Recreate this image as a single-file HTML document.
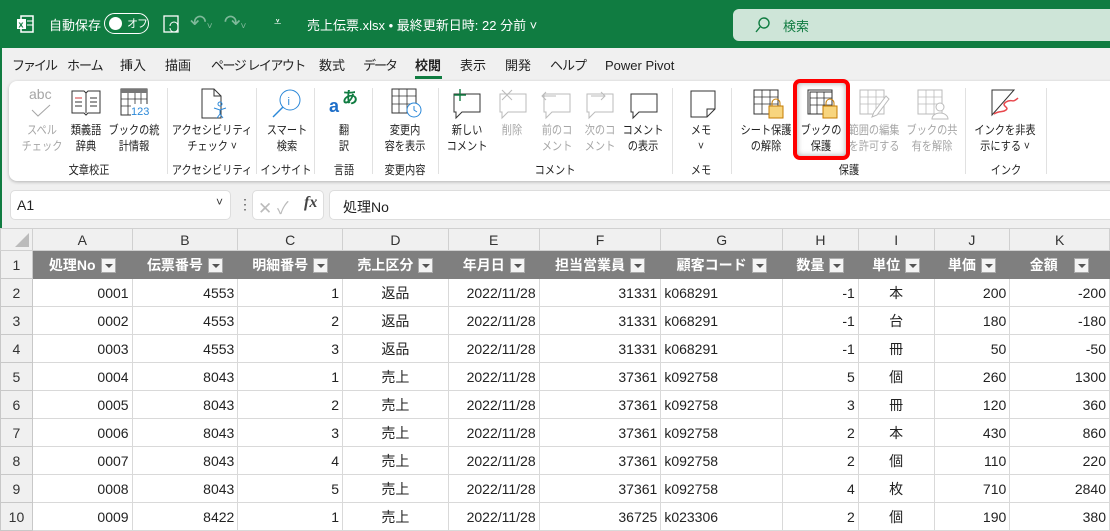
<!DOCTYPE html><html><head><meta charset="utf-8"><style>
*{box-sizing:border-box;margin:0;padding:0}
body{width:1110px;height:528px;overflow:hidden;background:#f0f0f0;font-family:"Liberation Sans","Noto Sans CJK JP",sans-serif;position:relative;color:#222}
.a{position:absolute;white-space:nowrap}
.t{font-size:12px;line-height:16px;text-align:center;transform:translateX(-50%) scaleX(.85)}
.g{color:#a6a6a6}
.sep{position:absolute;top:88px;width:1px;height:86px;background:#e1e1e1}
.gl{font-size:12px;top:162px}
.tab{position:absolute;top:57px;font-size:13px;line-height:18px;white-space:nowrap}
table{position:absolute;left:0;top:228px;border-collapse:collapse;table-layout:fixed;font-size:14px}
td{border:1px solid #d9d9d9;height:28px;padding:0 3px;background:#fff;overflow:hidden;white-space:nowrap}
td.rh{background:#f0f0f0;text-align:center;color:#333;border-color:#c8c8c8}
tr.ch td{background:#f0f0f0;height:22px;text-align:center;color:#333;border-color:#d0d0d0;font-size:14px}
tr.h1 td{background:#7f7f7f;color:#fff;font-weight:bold;text-align:center;border-color:#7f7f7f}
tr.h1 td.rh{background:#f0f0f0;color:#333;font-weight:normal;border-color:#c8c8c8}
.dd{display:inline-block;width:15px;height:15px;background:#f4f4f4;border:1px solid #aaa;vertical-align:middle;margin-left:5px;position:relative}
.dd:after{content:"";position:absolute;left:3px;top:5px;border-left:4px solid transparent;border-right:4px solid transparent;border-top:4px solid #555}
.r{text-align:right}.c{text-align:center}
</style></head><body>
<div class="a" style="left:0;top:0;width:1110px;height:48px;background:#107c41"></div>
<svg class="a" style="left:16px;top:15px" width="18" height="18" viewBox="0 0 18 18"><rect x="5" y="1" width="12" height="16" fill="none" stroke="#fff" stroke-width="1.5"/><rect x="1" y="4" width="9" height="10" fill="#fff"/><text x="2.5" y="12.5" font-size="9" font-weight="bold" fill="#107c41" font-family="Liberation Sans">x</text><line x1="11" y1="6" x2="17" y2="6" stroke="#fff"/><line x1="11" y1="10" x2="17" y2="10" stroke="#fff"/></svg>
<div class="a" style="left:49px;top:15px;color:#fff;font-size:13px">自動保存</div>
<div class="a" style="left:104px;top:13px;width:45px;height:21px;border:1.5px solid #fff;border-radius:11px"></div>
<div class="a" style="left:109px;top:17px;width:13px;height:13px;border-radius:50%;background:#fff"></div>
<div class="a" style="left:127px;top:15px;color:#fff;font-size:11px;letter-spacing:-1px">オフ</div>
<svg class="a" style="left:162px;top:14px" width="20" height="20"><rect x="2" y="2" width="14" height="16" fill="none" stroke="#fff" stroke-width="1.3"/><path d="M8 12a4 4 0 0 1 8 0M16 14a4 4 0 0 1-8 0" stroke="#fff" fill="none"/></svg>
<div class="a" style="left:190px;top:10px;color:#7fb99a;font-size:20px">↶<span style="font-size:10px">˅</span>&nbsp;&nbsp;↷<span style="font-size:10px">˅</span></div>
<div class="a" style="left:274px;top:14px;color:#fff;font-size:13px">⩡</div>
<div class="a" style="left:307px;top:15px;color:#fff;font-size:13px">売上伝票.xlsx • 最終更新日時: 22 分前 ˅</div>
<div class="a" style="left:733px;top:9px;width:400px;height:32px;background:#cee5d8;border-radius:6px"></div>
<svg class="a" style="left:755px;top:17px" width="16" height="16"><circle cx="9" cy="6" r="5" fill="none" stroke="#107c41" stroke-width="1.4"/><line x1="5" y1="10" x2="1" y2="15" stroke="#107c41" stroke-width="1.4"/></svg>
<div class="a" style="left:783px;top:16px;color:#107c41;font-size:13px">検索</div>
<div class="a" style="left:0;top:48px;width:2px;height:480px;background:#107c41"></div>
<div class="tab" style="left:12px;letter-spacing:-2px">ファイル</div>
<div class="tab" style="left:67px;letter-spacing:-1px">ホーム</div>
<div class="tab" style="left:120px">挿入</div>
<div class="tab" style="left:165px">描画</div>
<div class="tab" style="left:211px;letter-spacing:-1.5px">ページ レイアウト</div>
<div class="tab" style="left:319px">数式</div>
<div class="tab" style="left:363px;letter-spacing:-2px">データ</div>
<div class="tab" style="left:415px;font-weight:bold">校閲</div>
<div class="a" style="top:76px;left:415px;width:27px;height:3px;background:#107c41"></div>
<div class="tab" style="left:460px">表示</div>
<div class="tab" style="left:505px">開発</div>
<div class="tab" style="left:550px;letter-spacing:-1px">ヘルプ</div>
<div class="tab" style="left:605px">Power Pivot</div>
<div class="a" style="left:9px;top:81px;width:1120px;height:100px;background:#fff;border-radius:8px;box-shadow:0 1px 3px rgba(0,0,0,.25)"></div>
<!-- icons -->
<div class="a g" style="left:29px;top:86px;font-size:14px">abc</div>
<svg class="a" style="left:29px;top:104px" width="26" height="14"><path d="M3 6l6 6 12-11" stroke="#a6a6a6" fill="none"/></svg>
<svg class="a" style="left:70px;top:88px" width="32" height="30"><path d="M2 3h12l2 2 2-2h12v22H18l-2 2-2-2H2z" fill="none" stroke="#333"/><line x1="16" y1="5" x2="16" y2="25" stroke="#333"/><path d="M5 10h7M5 14h7M5 18h7M20 10h7M20 14h7M20 18h7" stroke="#333"/><line x1="5" y1="10" x2="12" y2="10" stroke="#d13438"/></svg>
<svg class="a" style="left:119px;top:88px" width="32" height="30"><rect x="2" y="1" width="26" height="26" fill="none" stroke="#333"/><rect x="2" y="1" width="26" height="4" fill="#777"/><path d="M2 11h26M2 18h26M9 5v22M16 5v22M22 5v22" stroke="#333" stroke-width=".8"/><rect x="12" y="16" width="20" height="12" fill="#fff"/><text x="12" y="27" font-size="11" fill="#2b88d8" font-family="Liberation Sans">123</text></svg>
<svg class="a" style="left:199px;top:88px" width="32" height="32"><path d="M3 1h12l7 7v22H3z" fill="none" stroke="#333"/><path d="M15 1v7h7" fill="none" stroke="#333"/><circle cx="21" cy="16" r="2" fill="none" stroke="#2b88d8"/><path d="M15 20l6 2 6-2M21 22v4l-3 4M21 26l3 4" stroke="#2b88d8" fill="none"/></svg>
<svg class="a" style="left:270px;top:88px" width="32" height="32"><circle cx="20" cy="12" r="10" fill="none" stroke="#2b88d8"/><line x1="13" y1="19" x2="3" y2="29" stroke="#2b88d8" stroke-width="1.4"/><text x="17.5" y="17" font-size="11" fill="#2b88d8" font-family="Liberation Sans">i</text></svg>
<div class="a" style="left:329px;top:96px;color:#1e6ec8;font-size:18px;font-weight:bold">a</div>
<div class="a" style="left:342px;top:84px;color:#107c41;font-size:16px;font-weight:bold">あ</div>
<svg class="a" style="left:390px;top:88px" width="32" height="32"><rect x="2" y="1" width="24" height="24" fill="none" stroke="#333"/><path d="M2 8h24M2 16h24M9 1v24M17 1v24" stroke="#333" stroke-width=".8"/><circle cx="24" cy="22" r="7" fill="#fff" stroke="#2b88d8"/><path d="M24 18v4l3 2" stroke="#2b88d8" fill="none"/></svg>
<svg class="a" style="left:450px;top:88px" width="34" height="32"><path d="M4 6h26v18H12l-6 6v-6H4z" fill="none" stroke="#333"/><path d="M10 1v12M4 7h12" stroke="#107c41" stroke-width="1.4"/></svg>
<svg class="a" style="left:496px;top:88px" width="34" height="32"><path d="M4 6h26v18H12l-6 6v-6H4z" fill="none" stroke="#bbb"/><path d="M6 2l10 10M16 2L6 12" stroke="#bbb"/></svg>
<svg class="a" style="left:540px;top:88px" width="34" height="32"><path d="M4 6h26v18H12l-6 6v-6H4z" fill="none" stroke="#bbb"/><path d="M2 8h14M6 4L2 8l4 4" stroke="#bbb" fill="none"/></svg>
<svg class="a" style="left:583px;top:88px" width="34" height="32"><path d="M4 6h26v18H12l-6 6v-6H4z" fill="none" stroke="#bbb"/><path d="M8 8h14M18 4l4 4-4 4" stroke="#bbb" fill="none"/></svg>
<svg class="a" style="left:627px;top:88px" width="34" height="32"><path d="M4 6h26v18H12l-6 6v-6H4z" fill="none" stroke="#333"/></svg>
<svg class="a" style="left:688px;top:88px" width="30" height="32"><path d="M3 3h24v18l-8 8H3z" fill="none" stroke="#333"/><path d="M27 21h-8v8" fill="none" stroke="#333"/></svg>
<svg class="a" style="left:752px;top:88px" width="34" height="34"><rect x="2" y="2" width="24" height="24" fill="none" stroke="#333"/><path d="M2 9h24M2 16h24M10 2v24M18 2v24" stroke="#333" stroke-width=".8"/><rect x="17" y="18" width="14" height="12" fill="#f8d57e" stroke="#c47b00"/><path d="M20 18v-3a4 4 0 0 1 8 0v3" fill="none" stroke="#c47b00"/></svg>
<svg class="a" style="left:806px;top:88px" width="34" height="34"><rect x="2" y="2" width="24" height="24" fill="none" stroke="#333"/><rect x="4" y="4" width="22" height="22" fill="none" stroke="#333"/><path d="M4 10h22M4 17h22M11 4v22M18 4v22" stroke="#333" stroke-width=".8"/><rect x="17" y="18" width="14" height="12" fill="#f8d57e" stroke="#c47b00"/><path d="M20 18v-3a4 4 0 0 1 8 0v3" fill="none" stroke="#c47b00"/></svg>
<svg class="a" style="left:858px;top:88px" width="34" height="34"><rect x="2" y="2" width="24" height="24" fill="none" stroke="#bbb"/><path d="M2 9h24M2 16h24M10 2v24M18 2v24" stroke="#bbb" stroke-width=".8"/><path d="M28 8L16 24l-2 5 5-2 12-16z" fill="#fff" stroke="#bbb"/></svg>
<svg class="a" style="left:916px;top:88px" width="34" height="34"><rect x="2" y="2" width="24" height="24" fill="none" stroke="#bbb"/><path d="M2 9h24M2 16h24M10 2v24M18 2v24" stroke="#bbb" stroke-width=".8"/><circle cx="24" cy="19" r="4" fill="#fff" stroke="#bbb"/><path d="M16 31a8 6 0 0 1 16 0z" fill="#fff" stroke="#bbb"/></svg>
<svg class="a" style="left:990px;top:88px" width="32" height="32"><path d="M2 2h22L2 27z" fill="none" stroke="#333"/><path d="M4 26c6-4 8-1 12-4s-6-4 0-8 6 2 12-4" stroke="#e8484d" fill="none" stroke-width="1.5"/></svg>
<!-- labels -->
<div class="a t g" style="left:42px;top:122px">スペル<br>チェック</div>
<div class="a t" style="left:86px;top:122px">類義語<br>辞典</div>
<div class="a t" style="left:134px;top:122px">ブックの統<br>計情報</div>
<div class="a t" style="left:212px;top:122px">アクセシビリティ<br>チェック ˅</div>
<div class="a t" style="left:287px;top:122px">スマート<br>検索</div>
<div class="a t" style="left:344px;top:122px">翻<br>訳</div>
<div class="a t" style="left:405px;top:122px">変更内<br>容を表示</div>
<div class="a t" style="left:467px;top:122px">新しい<br>コメント</div>
<div class="a t g" style="left:512px;top:122px">削除</div>
<div class="a t g" style="left:557px;top:122px">前のコ<br>メント</div>
<div class="a t g" style="left:600px;top:122px">次のコ<br>メント</div>
<div class="a t" style="left:643px;top:122px">コメント<br>の表示</div>
<div class="a t" style="left:701px;top:122px">メモ<br>˅</div>
<div class="a t" style="left:766px;top:122px">シート保護<br>の解除</div>
<div class="a t" style="left:821px;top:122px">ブックの<br>保護</div>
<div class="a t g" style="left:874px;top:122px">範囲の編集<br>を許可する</div>
<div class="a t g" style="left:932px;top:122px">ブックの共<br>有を解除</div>
<div class="a t" style="left:1005px;top:122px">インクを非表<br>示にする ˅</div>
<div class="a" style="left:793px;top:79px;width:57px;height:81px;border:4px solid #f00;border-radius:7px;box-shadow:inset 0 0 6px rgba(0,0,0,.35)"></div>
<div class="sep" style="left:167px"></div><div class="sep" style="left:256px"></div><div class="sep" style="left:314px"></div><div class="sep" style="left:372px"></div><div class="sep" style="left:438px"></div><div class="sep" style="left:672px"></div><div class="sep" style="left:731px"></div><div class="sep" style="left:965px"></div><div class="sep" style="left:1046px"></div>
<div class="a t gl" style="left:89px">文章校正</div>
<div class="a t gl" style="left:212px">アクセシビリティ</div>
<div class="a t gl" style="left:286px">インサイト</div>
<div class="a t gl" style="left:344px">言語</div>
<div class="a t gl" style="left:405px">変更内容</div>
<div class="a t gl" style="left:555px">コメント</div>
<div class="a t gl" style="left:701px">メモ</div>
<div class="a t gl" style="left:849px">保護</div>
<div class="a t gl" style="left:1006px">インク</div>
<!-- formula bar -->
<div class="a" style="left:10px;top:190px;width:221px;height:30px;background:#fff;border:1px solid #ddd;border-radius:5px"></div>
<div class="a" style="left:17px;top:197px;font-size:14px">A1</div>
<div class="a" style="left:216px;top:195px;font-size:12px;color:#333">˅</div>
<div class="a" style="left:238px;top:196px;font-size:14px;color:#555">⋮</div>
<div class="a" style="left:252px;top:190px;width:72px;height:30px;background:#fff;border:1px solid #ddd;border-radius:5px"></div>
<div class="a" style="left:258px;top:194px;font-size:17px;color:#bbb">✕ ✓</div>
<div class="a" style="left:304px;top:194px;font-size:16px;font-style:italic;font-family:'Liberation Serif',serif;font-weight:bold;color:#444">fx</div>
<div class="a" style="left:329px;top:190px;width:800px;height:30px;background:#fff;border:1px solid #ddd;border-radius:5px"></div>
<div class="a" style="left:343px;top:197px;font-size:14px">処理No</div>
<table>
<colgroup><col style="width:32px"><col style="width:100px"><col style="width:106px"><col style="width:105px"><col style="width:106px"><col style="width:91px"><col style="width:122px"><col style="width:122px"><col style="width:76px"><col style="width:76px"><col style="width:76px"><col style="width:100px"></colgroup>
<tr class="ch"><td style="position:relative"><div style="position:absolute;right:3px;bottom:3px;border-left:14px solid transparent;border-bottom:14px solid #bbb"></div></td><td>A</td><td>B</td><td>C</td><td>D</td><td>E</td><td>F</td><td>G</td><td>H</td><td>I</td><td>J</td><td>K</td></tr>
<tr class="h1"><td class="rh">1</td><td class="r">処理No<span class="dd"></span></td><td class="r">伝票番号<span class="dd"></span></td><td class="r">明細番号<span class="dd"></span></td><td class="r">売上区分<span class="dd"></span></td><td class="r">年月日<span class="dd"></span></td><td class="r">担当営業員<span class="dd"></span></td><td class="r">顧客コード<span class="dd"></span></td><td class="r">数量<span class="dd"></span></td><td class="r">単位<span class="dd"></span></td><td class="r">単価<span class="dd"></span></td><td class="r">金額 &nbsp; <span class="dd"></span></td></tr>
<tr><td class="rh">2</td><td class="r">0001</td><td class="r">4553</td><td class="r">1</td><td class="c">返品</td><td class="r">2022/11/28</td><td class="r">31331</td><td>k068291</td><td class="r">-1</td><td class="c">本</td><td class="r">200</td><td class="r">-200</td></tr>
<tr><td class="rh">3</td><td class="r">0002</td><td class="r">4553</td><td class="r">2</td><td class="c">返品</td><td class="r">2022/11/28</td><td class="r">31331</td><td>k068291</td><td class="r">-1</td><td class="c">台</td><td class="r">180</td><td class="r">-180</td></tr>
<tr><td class="rh">4</td><td class="r">0003</td><td class="r">4553</td><td class="r">3</td><td class="c">返品</td><td class="r">2022/11/28</td><td class="r">31331</td><td>k068291</td><td class="r">-1</td><td class="c">冊</td><td class="r">50</td><td class="r">-50</td></tr>
<tr><td class="rh">5</td><td class="r">0004</td><td class="r">8043</td><td class="r">1</td><td class="c">売上</td><td class="r">2022/11/28</td><td class="r">37361</td><td>k092758</td><td class="r">5</td><td class="c">個</td><td class="r">260</td><td class="r">1300</td></tr>
<tr><td class="rh">6</td><td class="r">0005</td><td class="r">8043</td><td class="r">2</td><td class="c">売上</td><td class="r">2022/11/28</td><td class="r">37361</td><td>k092758</td><td class="r">3</td><td class="c">冊</td><td class="r">120</td><td class="r">360</td></tr>
<tr><td class="rh">7</td><td class="r">0006</td><td class="r">8043</td><td class="r">3</td><td class="c">売上</td><td class="r">2022/11/28</td><td class="r">37361</td><td>k092758</td><td class="r">2</td><td class="c">本</td><td class="r">430</td><td class="r">860</td></tr>
<tr><td class="rh">8</td><td class="r">0007</td><td class="r">8043</td><td class="r">4</td><td class="c">売上</td><td class="r">2022/11/28</td><td class="r">37361</td><td>k092758</td><td class="r">2</td><td class="c">個</td><td class="r">110</td><td class="r">220</td></tr>
<tr><td class="rh">9</td><td class="r">0008</td><td class="r">8043</td><td class="r">5</td><td class="c">売上</td><td class="r">2022/11/28</td><td class="r">37361</td><td>k092758</td><td class="r">4</td><td class="c">枚</td><td class="r">710</td><td class="r">2840</td></tr>
<tr><td class="rh">10</td><td class="r">0009</td><td class="r">8422</td><td class="r">1</td><td class="c">売上</td><td class="r">2022/11/28</td><td class="r">36725</td><td>k023306</td><td class="r">2</td><td class="c">個</td><td class="r">190</td><td class="r">380</td></tr>
</table>
</body></html>
